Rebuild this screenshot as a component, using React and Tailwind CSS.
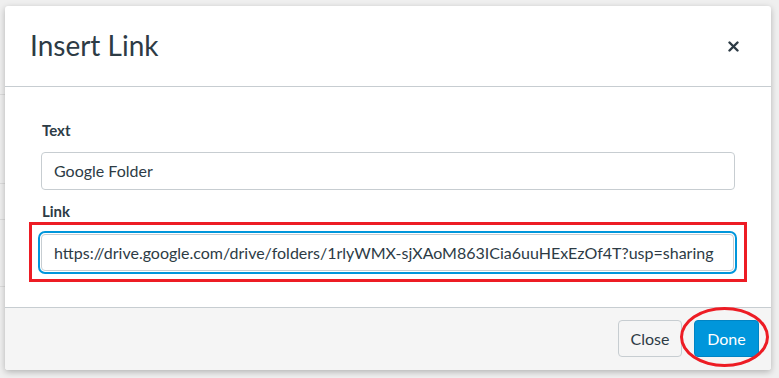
import React from 'react';

export default function App() {
  return (
    <div
      className="relative w-[779px] h-[378px] overflow-hidden bg-[#efefef] pt-[6px] pl-[5px] text-[#2d3b45]"
      style={{ fontFamily: 'Lato, "Noto Sans", sans-serif' }}
    >
      {/* faint page behind the dialog */}
      <div className="absolute left-0 top-0 w-[5px] h-full">
        <div className="mt-[94px] h-px bg-[#dcdcdc]" />
        <div className="mt-[88px] h-px bg-[#dcdcdc]" />
        <div className="mt-[35px] h-px bg-[#dcdcdc]" />
        <div className="mt-[66px] h-px bg-[#dcdcdc]" />
      </div>

      <div className="relative flex flex-col w-[766px] h-[364px] bg-white rounded-[3px] shadow-[0_2px_6px_rgba(0,0,0,0.25)] overflow-hidden">
        {/* header */}
        <div className="flex items-center justify-between h-[81px] shrink-0 pl-[25px] pr-[32px] border-b border-[#c7cdd1]">
          <h2 className="text-[28px] leading-none font-normal pb-[2px]">Insert Link</h2>
          <button className="w-[11px] h-[11px] flex items-center justify-center">
            <svg width="11" height="11" viewBox="0 0 11 11">
              <path d="M1.5 1.5 L9.5 9.5 M9.5 1.5 L1.5 9.5" stroke="#2d3b45" strokeWidth="2.4" strokeLinecap="round" />
            </svg>
          </button>
        </div>

        {/* body */}
        <div className="flex-1 px-[36px] pt-[34px]">
          <label className="block text-[15px] leading-[18px] font-bold pl-[1px]">Text</label>
          <div className="mt-[13px] h-[38px] flex items-center border border-[#c7cdd1] rounded-[4px] pl-[12px] text-[16px]">
            Google Folder
          </div>
          <label className="block mt-[12px] text-[15px] leading-[18px] font-bold pl-[1px]">Link</label>
          <div className="-mx-[12px] mt-[2px] border-[3px] border-[#ed1c24] pl-[9px] pr-[10px] pt-[9px] pb-[8px]">
            <div className="h-[37px] flex items-center border border-[#c7cdd1] rounded-[4px] outline-2 outline-offset-1 outline-[#0096db] pl-[12px] text-[16px] whitespace-nowrap overflow-hidden">
              https://drive.google.com/drive/folders/1rlyWMX-sjXAoM863ICia6uuHExEzOf4T?usp=sharing
            </div>
          </div>
        </div>

        {/* footer */}
        <div className="flex justify-end gap-[12px] h-[63px] shrink-0 p-[12px] bg-[#f5f5f5] border-t border-[#c7cdd1]">
          <button className="w-[64px] h-[37px] bg-[#f5f5f5] border border-[#c7cdd1] rounded-[4px] text-[16px] text-[#2d3b45]">
            Close
          </button>
          <button className="w-[65px] h-[37px] bg-[#0096db] border border-[#0084c4] rounded-[4px] text-[16px] text-white">
            Done
          </button>
        </div>
      </div>

      {/* annotation ellipse */}
      <div className="absolute left-[680px] top-[307px] w-[89px] h-[60px] rounded-[50%] border-[3px] border-[#ed1c24]" />
    </div>
  );
}
